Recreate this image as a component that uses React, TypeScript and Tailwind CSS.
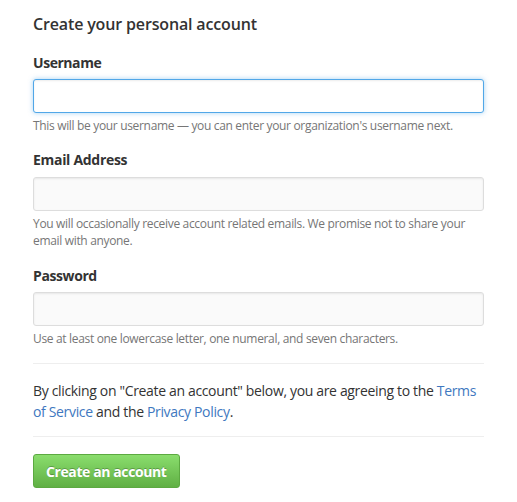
import React from "react";

export default function App() {
  const font = { fontFamily: '"Open Sans", "Noto Sans", sans-serif' };
  return (
    <div className="bg-white w-[517px] h-[502px] px-[33px] text-[#333]" style={font}>
      <div className="w-[451px] pt-[12px]">
        <h2 className="text-[16px] leading-[24px] font-semibold tracking-[-0.15px] text-[#333]">Create your personal account</h2>

        <label className="block mt-[17px] text-[14px] leading-[20px] font-bold tracking-[-0.45px]">Username</label>
        <input
          type="text"
          className="block mt-[6px] w-full h-[34px] rounded-[3px] border border-[#51a7e8] bg-white px-2 text-[13px] outline-none shadow-[inset_0_1px_2px_rgba(0,0,0,0.075),0_0_5px_rgba(81,167,232,0.5)]"
        />
        <p className="mt-[4px] text-[12px] leading-[17px] tracking-[-0.33px] text-[#767676]">
          This will be your username — you can enter your organization's username next.
        </p>

        <label className="block mt-[16px] text-[14px] leading-[20px] font-bold tracking-[-0.3px]">Email Address</label>
        <input
          type="text"
          className="block mt-[7px] w-full h-[34px] rounded-[3px] border border-[#ddd] bg-[#fafafa] px-2 text-[13px] outline-none shadow-[inset_0_1px_2px_rgba(0,0,0,0.075)]"
        />
        <p className="mt-[4px] text-[12px] leading-[17px] tracking-[-0.33px] text-[#767676]">
          You will occasionally receive account related emails. We promise not to share your email with anyone.
        </p>

        <label className="block mt-[17px] text-[14px] leading-[20px] font-bold tracking-[-0.4px]">Password</label>
        <input
          type="password"
          className="block mt-[6px] w-full h-[34px] rounded-[3px] border border-[#ddd] bg-[#fafafa] px-2 text-[13px] outline-none shadow-[inset_0_1px_2px_rgba(0,0,0,0.075)]"
        />
        <p className="mt-[4px] text-[12px] leading-[17px] tracking-[-0.33px] text-[#767676]">
          Use at least one lowercase letter, one numeral, and seven characters.
        </p>

        <hr className="mt-[16px] border-0 border-t border-[#eee]" />

        <p className="mt-[16px] text-[14px] leading-[21px] tracking-[-0.34px] text-[#333]">
          By clicking on "Create an account" below, you are agreeing to the{" "}
          <a className="text-[#4078c0]">Terms of Service</a> and the{" "}
          <a className="text-[#4078c0]">Privacy Policy</a>.
        </p>

        <hr className="mt-[14px] border-0 border-t border-[#eee]" />

        <button className="mt-[17px] h-[34px] px-[12px] rounded-[3px] border border-[#5ca941] bg-gradient-to-b from-[#8add6d] to-[#60b044] text-white text-[14px] font-bold tracking-[-0.4px] [text-shadow:0_-1px_0_rgba(0,0,0,0.25)]">
          Create an account
        </button>
      </div>
    </div>
  );
}
